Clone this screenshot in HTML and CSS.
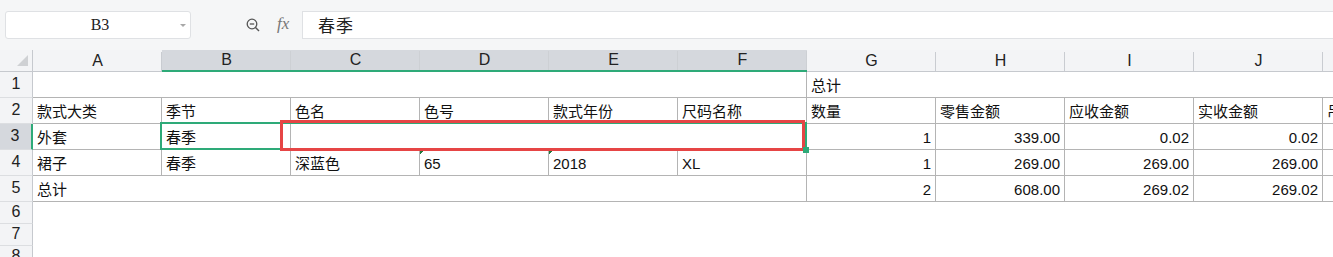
FILE: index.html
```html
<!DOCTYPE html>
<html lang="zh">
<head>
  <meta charset="UTF-8">
  <title>表格</title>
  <link rel="stylesheet" href="styles.css">
</head>
<body>

  <!-- 名称框 + 编辑栏 -->
  <div class="toolbar">
    <div class="name-box">
      <span class="name-text">B3</span>
      <span class="caret"></span>
    </div>
    <svg class="zoom-icon" width="14" height="14" viewBox="0 0 14 14">
      <circle cx="6" cy="6" r="4.8" fill="none" stroke="#555" stroke-width="1.3"/>
      <line x1="3.8" y1="6" x2="8.2" y2="6" stroke="#555" stroke-width="1.3"/>
      <line x1="9.5" y1="9.5" x2="13" y2="13" stroke="#555" stroke-width="1.4"/>
    </svg>
    <span class="fx">fx</span>
    <div class="formula">春季</div>
  </div>

  <div class="sheet">
    <div class="col-heads">
      <div class="corner"><span class="corner-tri"></span></div>
      <div class="col-head">A</div>
      <div class="col-head sel">B</div>
      <div class="col-head sel">C</div>
      <div class="col-head sel">D</div>
      <div class="col-head sel">E</div>
      <div class="col-head sel">F</div>
      <div class="col-head">G</div>
      <div class="col-head">H</div>
      <div class="col-head">I</div>
      <div class="col-head">J</div>
      <div class="col-head"></div>
    </div>

    <div class="row">
      <div class="row-head">1</div>
      <div class="cell span6"></div>
      <div class="cell span-rest">总计</div>
    </div>

    <div class="row">
      <div class="row-head">2</div>
      <div class="cell">款式大类</div>
      <div class="cell">季节</div>
      <div class="cell">色名</div>
      <div class="cell">色号</div>
      <div class="cell">款式年份</div>
      <div class="cell">尺码名称</div>
      <div class="cell">数量</div>
      <div class="cell">零售金额</div>
      <div class="cell">应收金额</div>
      <div class="cell">实收金额</div>
      <div class="cell last">吊</div>
    </div>

    <div class="row">
      <div class="row-head sel">3</div>
      <div class="cell">外套</div>
      <div class="cell">春季</div>
      <div class="cell span4"></div>
      <div class="cell num">1</div>
      <div class="cell num">339.00</div>
      <div class="cell num">0.02</div>
      <div class="cell num">0.02</div>
      <div class="cell last"></div>
    </div>

    <div class="row">
      <div class="row-head">4</div>
      <div class="cell">裙子</div>
      <div class="cell">春季</div>
      <div class="cell">深蓝色</div>
      <div class="cell text-num">65</div>
      <div class="cell text-num">2018</div>
      <div class="cell">XL</div>
      <div class="cell num">1</div>
      <div class="cell num">269.00</div>
      <div class="cell num">269.00</div>
      <div class="cell num">269.00</div>
      <div class="cell last"></div>
    </div>

    <div class="row">
      <div class="row-head">5</div>
      <div class="cell span6">总计</div>
      <div class="cell num">2</div>
      <div class="cell num">608.00</div>
      <div class="cell num">269.02</div>
      <div class="cell num">269.02</div>
      <div class="cell last"></div>
    </div>

    <div class="row short">
      <div class="row-head">6</div>
    </div>
    <div class="row short">
      <div class="row-head">7</div>
    </div>
    <div class="row short">
      <div class="row-head">8</div>
    </div>

    <!-- 选区和红框 -->
    <div class="selection"></div>
    <div class="mark"></div>
    <div class="handle"></div>
  </div>

</body>
</html>
```

FILE: styles.css
```css
body {
  margin: 0;
  width: 1333px;
  height: 257px;
  overflow: hidden;
  background-color: #ffffff;
  font-family: "Liberation Sans", "Noto Sans CJK SC", sans-serif;
  color: #111;
}

/* 顶部编辑栏 */
.toolbar {
  display: flex;
  align-items: flex-start;
  height: 50px;
  box-sizing: border-box;
  padding: 11px 0 0 5px;
  background-color: #f5f6f7;
}

.name-box {
  display: flex;
  align-items: center;
  width: 186px;
  height: 28px;
  box-sizing: border-box;
  background-color: #ffffff;
  border: 1px solid #dfe1e4;
  border-radius: 3px;
}

.name-text {
  flex: 1;
  text-align: center;
  font-family: "Liberation Serif", serif;
  font-size: 16px;
  padding-left: 14px;
  color: #222;
}

.caret {
  width: 0;
  height: 0;
  margin-right: 4px;
  border-left: 3px solid transparent;
  border-right: 3px solid transparent;
  border-top: 3px solid #a8a8a8;
}

.zoom-icon {
  margin: 7px 0 0 55px;
}

.fx {
  width: 14px;
  margin: 3px 0 0 17px;
  font-family: "Liberation Serif", serif;
  font-style: italic;
  font-size: 17px;
  color: #777;
}

.formula {
  flex: 1;
  height: 28px;
  box-sizing: border-box;
  margin-left: 11px;
  padding-left: 15px;
  background-color: #ffffff;
  border: 1px solid #dfe1e4;
  border-right: none;
  font-family: "Noto Sans CJK SC", sans-serif;
  font-size: 17px;
  line-height: 25px;
  letter-spacing: 1px;
  color: #222;
}

/* 表格区 */
.sheet {
  position: relative;
}

.col-heads {
  display: flex;
  height: 22px;
  background-color: #f3f4f6;
}

.corner {
  display: flex;
  align-items: flex-end;
  justify-content: flex-end;
  width: 33px;
  flex-shrink: 0;
  box-sizing: border-box;
  padding: 0 4px 5px 0;
  border-right: 1px solid #c6c9ce;
  border-bottom: 1px solid #c6c9ce;
}

.corner-tri {
  width: 0;
  height: 0;
  border-left: 11px solid transparent;
  border-bottom: 11px solid #cfd1d4;
}

.col-head {
  width: 129px;
  flex-shrink: 0;
  box-sizing: border-box;
  text-align: center;
  font-size: 16px;
  line-height: 21px;
  color: #222;
  border-bottom: 1px solid #c6c9ce;
  background: linear-gradient(#c9ccd1, #c9ccd1) right bottom / 1px 19px no-repeat;
}

.col-head.sel {
  background-color: #d5d8dd;
  background-image: linear-gradient(#cdd0d4, #cdd0d4);
  border-bottom: 2px solid #2eaa78;
  line-height: 20px;
}

.row {
  display: flex;
  height: 26px;
}

.row.short {
  height: 22px;
}

.row-head {
  width: 33px;
  flex-shrink: 0;
  box-sizing: border-box;
  text-align: center;
  font-size: 16px;
  padding-top: 3px;
  background-color: #f3f4f6;
  border-right: 1px solid #c6c9ce;
  border-bottom: 1px solid #dcdee1;
  color: #222;
}

.row.short .row-head {
  padding-top: 1px;
}

.row-head.sel {
  background-color: #d5d8dd;
  border-right: 2px solid #2eaa78;
  padding-right: 1px;
}

.cell {
  width: 129px;
  flex-shrink: 0;
  box-sizing: border-box;
  padding: 2px 4px 0 4px;
  font-size: 15px;
  line-height: 23px;
  white-space: nowrap;
  overflow: hidden;
  border-right: 1px solid #b4b4b4;
  border-bottom: 1px solid #b4b4b4;
}

.cell.num {
  text-align: right;
}

.cell.span4 {
  width: 516px;
}

.cell.span6 {
  width: 774px;
}

.cell.span-rest {
  flex: 1;
  border-right: none;
}

.cell.last {
  width: 10px;
  padding-right: 0;
  border-right: none;
}

/* 文本型数字的绿色角标 */
.cell.text-num {
  background: linear-gradient(135deg, #1f7a3e 3px, transparent 3px) left top / 6px 6px no-repeat;
}

.selection {
  position: absolute;
  left: 160px;
  top: 72px;
  width: 647px;
  height: 28px;
  box-sizing: border-box;
  border: 2px solid #2eaa78;
}

.mark {
  position: absolute;
  left: 280px;
  top: 70px;
  width: 525px;
  height: 31px;
  box-sizing: border-box;
  border: 3px solid #e64545;
}

.handle {
  position: absolute;
  left: 803px;
  top: 97px;
  width: 6px;
  height: 6px;
  background-color: #2eaa78;
}
```
